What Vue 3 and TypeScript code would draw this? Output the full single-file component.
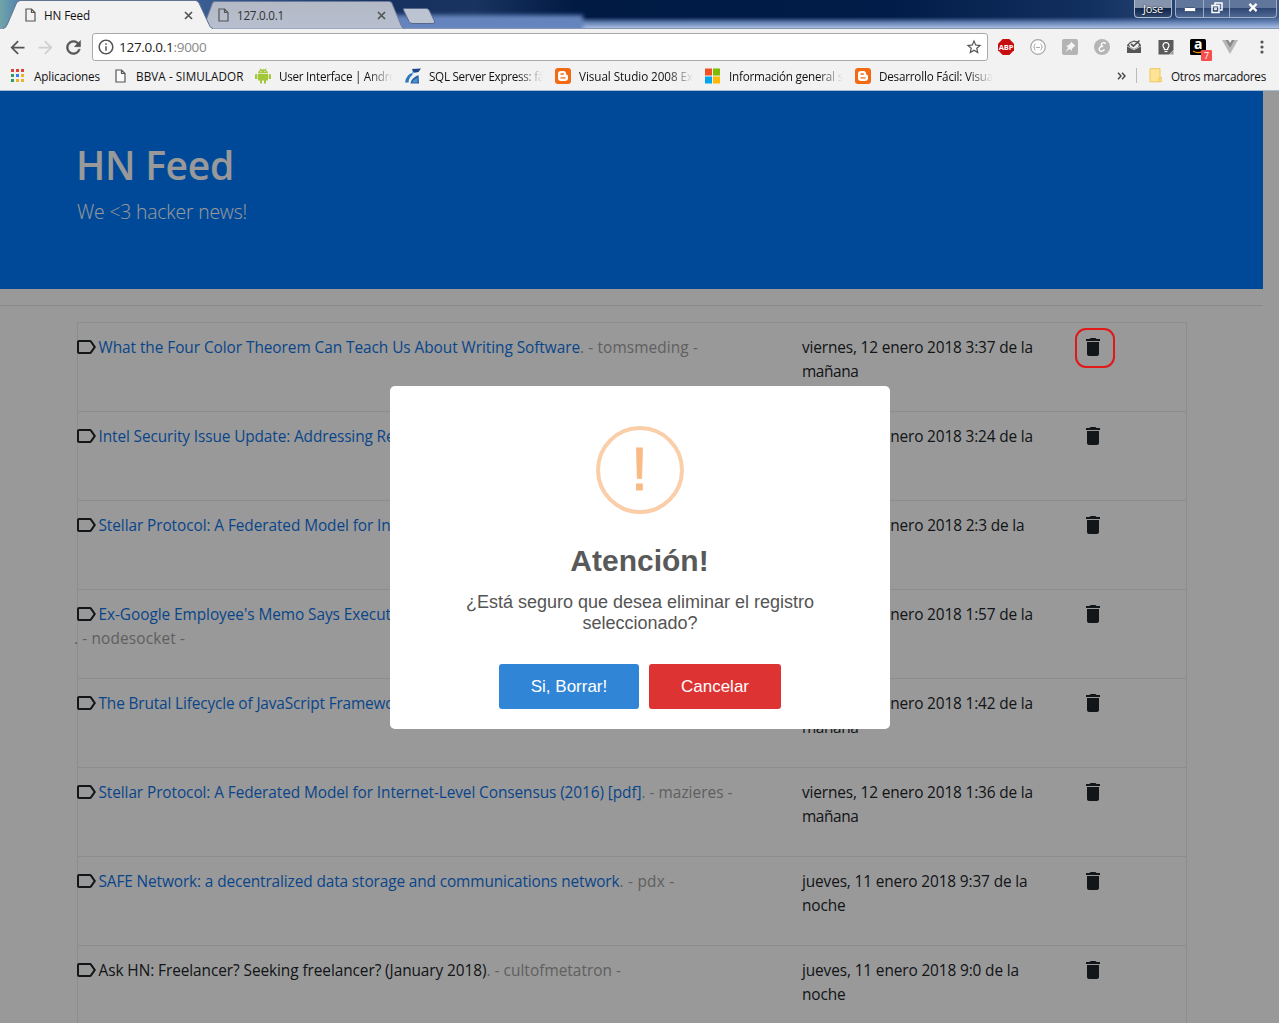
<script setup lang="ts">
interface Bookmark {
  label: string
  icon: 'apps' | 'page' | 'android' | 'sql' | 'blogger' | 'windows'
  width: number
  fit: number
  faded: boolean
}

interface Story {
  title: string
  tail: string
  titleWidth: number
  tailWidth: number
  plain?: boolean
  wrapped?: boolean
  date: string
  dateWidth: number
  period: string
}

// Spreads the letters of an element so that it takes the given width.
const vFit = {
  mounted(el: HTMLElement, binding: { value: number }) {
    const count = (el.textContent ?? '').length
    if (!binding.value || !count) return
    el.style.letterSpacing = '0px'
    const natural = el.getBoundingClientRect().width
    el.style.letterSpacing = `${(binding.value - natural) / count}px`
  },
}

const bookmarks: Bookmark[] = [
  { label: 'Aplicaciones', icon: 'apps', width: 104, fit: 66, faded: false },
  { label: 'BBVA - SIMULADOR', icon: 'page', width: 140, fit: 107.5, faded: false },
  { label: 'User Interface | Andro', icon: 'android', width: 150, fit: 117, faded: true },
  { label: 'SQL Server Express: fá', icon: 'sql', width: 150, fit: 115, faded: true },
  { label: 'Visual Studio 2008 Ex', icon: 'blogger', width: 150, fit: 114, faded: true },
  { label: 'Información general s', icon: 'windows', width: 150, fit: 114, faded: true },
  { label: 'Desarrollo Fácil: Visua', icon: 'blogger', width: 150, fit: 114, faded: true },
]

const am = 'mañana'
const pm = 'noche'

const stories: Story[] = [
  { title: 'What the Four Color Theorem Can Teach Us About Writing Software', tail: '. - tomsmeding -', titleWidth: 481.5, tailWidth: 118, date: 'viernes, 12 enero 2018 3:37 de la', dateWidth: 231, period: am },
  { title: 'Intel Security Issue Update: Addressing Re', tail: '', titleWidth: 296, tailWidth: 0, date: 'viernes, 12 enero 2018 3:24 de la', dateWidth: 231, period: am },
  { title: 'Stellar Protocol: A Federated Model for Internet-Level Consensus (2016) [pdf]', tail: '', titleWidth: 543.5, tailWidth: 0, date: 'viernes, 12 enero 2018 2:3 de la', dateWidth: 222.5, period: am },
  { title: "Ex-Google Employee's Memo Says Execut", tail: '. - nodesocket -', titleWidth: 292.5, tailWidth: 111, wrapped: true, date: 'viernes, 12 enero 2018 1:57 de la', dateWidth: 231, period: am },
  { title: 'The Brutal Lifecycle of JavaScript Framewo', tail: '', titleWidth: 296, tailWidth: 0, date: 'viernes, 12 enero 2018 1:42 de la', dateWidth: 231, period: am },
  { title: 'Stellar Protocol: A Federated Model for Internet-Level Consensus (2016) [pdf]', tail: '. - mazieres -', titleWidth: 543, tailWidth: 91, date: 'viernes, 12 enero 2018 1:36 de la', dateWidth: 231, period: am },
  { title: 'SAFE Network: a decentralized data storage and communications network', tail: '. - pdx -', titleWidth: 521, tailWidth: 55, date: 'jueves, 11 enero 2018 9:37 de la', dateWidth: 225.5, period: pm },
  { title: 'Ask HN: Freelancer? Seeking freelancer? (January 2018)', tail: '. - cultofmetatron -', titleWidth: 388, tailWidth: 134.5, plain: true, date: 'jueves, 11 enero 2018 9:0 de la', dateWidth: 217, period: pm },
]
</script>

<template>
  <div class="window">
    <header class="chrome">
      <div class="tabstrip">
        <svg class="tabstrip-art" width="1279" height="29" viewBox="0 0 1279 29">
          <defs>
            <linearGradient id="sky" x1="0" x2="1" y1="0" y2="0">
              <stop offset="0" stop-color="#6fa5a8" />
              <stop offset=".015" stop-color="#5581b2" />
              <stop offset=".15" stop-color="#3c5f95" />
              <stop offset=".31" stop-color="#16305f" />
              <stop offset=".37" stop-color="#1a3461" />
              <stop offset=".45" stop-color="#001a44" />
              <stop offset=".7" stop-color="#011c48" />
              <stop offset=".85" stop-color="#12305f" />
              <stop offset="1" stop-color="#3d5a8c" />
            </linearGradient>
            <linearGradient id="glow" x1="0" x2="0" y1="0" y2="1">
              <stop offset="0" stop-color="#6f8fc4" stop-opacity="0" />
              <stop offset=".5" stop-color="#7391c3" stop-opacity=".85" />
              <stop offset="1" stop-color="#a9bfe2" />
            </linearGradient>
            <linearGradient id="idle" x1="0" x2="0" y1="0" y2="1">
              <stop offset="0" stop-color="#b3b9c4" />
              <stop offset="1" stop-color="#b7bfd0" />
            </linearGradient>
            <filter id="soft" x="-10%" y="-50%" width="120%" height="200%"><feGaussianBlur stdDeviation="2" /></filter>
          </defs>
          <rect width="1279" height="29" fill="url(#sky)" />
          <rect x="380" y="17" width="899" height="11" fill="url(#glow)" />
          <rect x="380" y="15" width="203" height="16" fill="#6584bd" filter="url(#soft)" />
          <rect y="28" width="1279" height="1" fill="#8795b3" />
          <path d="M203 28.500L212.500 3Q213 1.500 215 1.500H389Q391 1.500 391.800 3L401 25Q402 28.500 405 28.500" fill="url(#idle)" stroke="#6b7b9b" />
          <path d="M404 8.500H426Q428 8.500 429 10L434.500 21Q435 23.500 433 23.500H412Q410 23.500 409 21.500L403.500 10Q403 8.500 404 8.500Z" fill="#bcc4d2" stroke="#56698d" />
          <path d="M3 29Q6 28 7.500 24L16.500 3Q17.500 1 20 1H196Q198 1 199 3L209 24.500Q210 28 213 29Z" fill="#f2f2f2" />
          <path d="M3 28.500Q6 28 7.500 24L16.500 3Q17.500 1 20 .5H196Q198 1 199 3L209 24.500Q210 28 213 28.500" fill="none" stroke="#60738f" />
        </svg>
        <div class="tab">
          <svg class="page-icon" width="11" height="14" viewBox="0 0 11 14"><path d="M1 1H6.500L10 4.500V13H1ZM6.500 1V4.500H10" /></svg>
          <span v-fit="46" class="tab-title">HN Feed</span>
          <svg class="tab-close" width="9" height="9" viewBox="0 0 9 9"><path d="M1 1L8 8M8 1L1 8" /></svg>
        </div>
        <div class="tab">
          <svg class="page-icon" width="11" height="14" viewBox="0 0 11 14"><path d="M1 1H6.500L10 4.500V13H1ZM6.500 1V4.500H10" /></svg>
          <span v-fit="47" class="tab-title">127.0.0.1</span>
          <svg class="tab-close" width="9" height="9" viewBox="0 0 9 9"><path d="M1 1L8 8M8 1L1 8" /></svg>
        </div>
        <div class="controls">
          <span class="user">Jose</span>
          <div class="buttons">
            <span class="control min"><svg width="12" height="5" viewBox="0 0 12 5"><rect x=".5" y=".5" width="11" height="4" rx="1" fill="#fff" stroke="#4b5b78" /></svg></span>
            <span class="control max"><svg width="12" height="12" viewBox="0 0 12 12" fill="none" stroke="#fff" stroke-width="1.500"><path d="M4 3V1H11V8H9" /><rect x="1" y="3.500" width="7" height="7" /><rect x="3.700" y="6" width="1.600" height="1.600" stroke-width="1" /></svg></span>
            <span class="control shut"><svg width="10" height="9" viewBox="0 0 11 10"><path d="M1.500 1L9.500 9M9.500 1L1.500 9" stroke="#fff" stroke-width="2.500" /></svg></span>
          </div>
        </div>
      </div>

      <div class="toolbar">
        <svg class="nav" width="21" height="21" viewBox="0 0 24 24" fill="#555"><path d="M20 11H7.830l5.590-5.590L12 4l-8 8 8 8 1.410-1.410L7.830 13H20v-2z" /></svg>
        <svg class="nav" width="21" height="21" viewBox="0 0 24 24" fill="#d0d0d0"><path d="M12 4l-1.410 1.410L16.170 11H4v2h12.170l-5.580 5.590L12 20l8-8z" /></svg>
        <svg class="nav" width="21" height="21" viewBox="0 0 24 24" fill="#555" stroke="#555" stroke-width=".6"><path d="M17.650 6.350C16.200 4.900 14.210 4 12 4c-4.420 0-7.990 3.580-7.990 8s3.570 8 7.990 8c3.730 0 6.840-2.550 7.730-6h-2.080c-.82 2.330-3.040 4-5.650 4-3.310 0-6-2.690-6-6s2.690-6 6-6c1.660 0 3.140.69 4.220 1.780L13 11h7V4l-2.350 2.350z" /></svg>
        <div class="omnibox">
          <svg width="18" height="18" viewBox="0 0 24 24" fill="#555"><path d="M11 17h2v-6h-2v6zm1-15C6.480 2 2 6.480 2 12s4.480 10 10 10 10-4.480 10-10S17.520 2 12 2zm0 18c-4.410 0-8-3.590-8-8s3.590-8 8-8 8 3.590 8 8-3.590 8-8 8zM11 9h2V7h-2v2z" /></svg>
          <span v-fit="87.5" class="address">127.0.0.1<span class="port">:9000</span></span>
          <svg class="star" width="18" height="18" viewBox="0 0 24 24" fill="#555"><path d="M22 9.240l-7.190-.62L12 2 9.190 8.630 2 9.240l5.460 4.730L5.820 21 12 17.270 18.180 21l-1.630-7.030L22 9.240zM12 15.400l-3.760 2.270 1-4.280-3.320-2.880 4.380-.38L12 6.100l1.710 4.040 4.380.38-3.320 2.880 1 4.280L12 15.400z" /></svg>
        </div>
        <div class="extensions">
          <span class="ext abp"><svg width="16" height="16" viewBox="0 0 16 16"><path d="M4.700 0H11.300L16 4.700V11.300L11.300 16H4.700L0 11.300V4.700Z" fill="#c70d0d" /></svg><b>ABP</b></span>
          <span class="ext json"><svg width="16" height="16" viewBox="0 0 16 16"><circle cx="8" cy="8" r="7.300" fill="#fdfdfd" stroke="#a5a5a5" stroke-width="1.200" /><path d="M5.500 5Q4.300 5 4.500 6.500Q4.600 8 3.500 8Q4.600 8 4.500 9.500Q4.300 11 5.500 11M10.500 5Q11.700 5 11.500 6.500Q11.400 8 12.500 8Q11.400 8 11.500 9.500Q11.700 11 10.500 11M6 8.500H10" fill="none" stroke="#aaa" /></svg></span>
          <span class="ext"><svg width="16" height="16" viewBox="0 0 16 16"><rect width="16" height="16" rx="2" fill="#b4b4b4" /><path d="M9 2.500L13.500 7L12.200 7.500L9.800 10V12L7.500 10L3.500 13L6.200 8.700L4 6.500H6.200L8.700 4Z" fill="#f5f5f5" /></svg></span>
          <span class="ext"><svg width="16" height="16" viewBox="0 0 16 16"><circle cx="8" cy="8" r="8" fill="#b5b5b5" /><path d="M11.300 5Q11.500 3.400 9.500 3.600Q7.200 4 7.300 6Q7.400 7.400 9.200 7.300Q5.500 7.500 5.200 10Q5.200 12.300 7.500 12.200Q9.500 12 10.500 10.300" fill="none" stroke="#fff" stroke-width="1.400" /></svg></span>
          <span class="ext"><svg width="16" height="16" viewBox="0 0 16 16"><path d="M1 6L4 3L8 1.500L12 2.500L15 6V14H1Z" fill="#555" /><path d="M3 5.500Q8 0 13 5.500L12 8L8 10L4 8Z" fill="#f2f2f2" /><path d="M5 5L7.500 7.200L13.500 1.500" fill="none" stroke="#555" stroke-width="1.700" /><path d="M1 7L8 10.800L15 7" fill="none" stroke="#f2f2f2" stroke-width=".7" /></svg></span>
          <span class="ext"><svg width="16" height="16" viewBox="0 0 16 16"><path d="M.5 1H15.500V11L11 15.500H.5Z" fill="#5a5a5a" /><path d="M15.500 11.500V15.500H11.500Z" fill="#999" /><path d="M6.300 10.500V9.200Q5 8.300 5 6.500Q5.200 3.600 8 3.500Q10.800 3.600 11 6.500Q11 8.300 9.700 9.200V10.500Z" fill="none" stroke="#fff" stroke-width="1.200" /><path d="M6.500 12.500H9.500" stroke="#fff" stroke-width="1.200" /></svg></span>
          <span class="ext amazon"><svg width="16" height="16" viewBox="0 0 16 16"><rect width="16" height="16" rx="1.500" fill="#000" /><path d="M3 12Q8 15 12 12.500" fill="none" stroke="#f79400" stroke-width="1.200" /></svg><b>a</b><i>7</i></span>
          <span class="ext"><svg width="16" height="14" viewBox="0 0 16 14"><path d="M0 0H3.300L8 8L12.700 0H16L8 14Z" fill="#b7b7b7" /><path d="M3.300 0H6.200L8 3L9.800 0H12.700L8 8Z" fill="#888" /></svg></span>
          <span class="ext"><svg width="4" height="14" viewBox="0 0 4 14" fill="#555"><circle cx="2" cy="2" r="1.600" /><circle cx="2" cy="7" r="1.600" /><circle cx="2" cy="12" r="1.600" /></svg></span>
        </div>
      </div>

      <div class="bookmarks">
        <div v-for="(mark, i) in bookmarks" :key="i" class="bookmark" :style="{ width: mark.width + 'px' }">
          <svg v-if="mark.icon === 'apps'" class="apps" width="13" height="13" viewBox="0 0 13 13"><path d="M0 0H3V3H0ZM5 0H8V3H5ZM10 0H13V3H10Z" fill="#db4437" /><path d="M0 5H3V8H0Z" fill="#2f9e5b" /><path d="M5 5H8V8H5Z" fill="#3b7ded" /><path d="M10 5H13V8H10ZM5 10H8V13H5ZM10 10H13V13H10Z" fill="#eeb32d" /><path d="M0 10H3V13H0Z" fill="#2f9e5b" /></svg>
          <svg v-else-if="mark.icon === 'page'" class="page-icon doc" width="11" height="14" viewBox="0 0 11 14"><path d="M1 1H6.500L10 4.500V13H1ZM6.500 1V4.500H10" /></svg>
          <svg v-else-if="mark.icon === 'android'" class="fav" width="16" height="16" viewBox="0 0 16 16" fill="#a4c639"><path d="M3 5.300Q3 2.800 5.300 1.800L4.500 .5L5.200 .2L6.100 1.500Q8 1 9.900 1.500L10.800 .2L11.500 .5L10.700 1.800Q13 2.800 13 5.300Z" /><path d="M3 6H13V12.500H11V15.500H9V12.500H7V15.500H5V12.500H3ZM0 6.500Q1.200 5.300 2.300 6.500V11H0ZM13.700 6.500Q14.900 5.300 16 6.500V11H13.700Z" /><circle cx="6" cy="3.600" r=".6" fill="#fff" /><circle cx="10" cy="3.600" r=".6" fill="#fff" /></svg>
          <svg v-else-if="mark.icon === 'sql'" class="fav" width="16" height="16" viewBox="0 0 16 16"><path d="M7 1L16 .5L13.500 4L8.500 5Z" fill="#1e4488" /><path d="M0 14.500Q1 7 7 5L7.500 7Q4 9 3.500 14.500Z" fill="#2d78bd" /><path d="M13.500 7L14 15.500H5.500Q6 10 13.500 7Z" fill="#245da3" /><path d="M7 3L10 4.500L7 6.500Z" fill="#74b8df" /><path d="M7 14.500Q8 11.500 12.500 10V14.500Z" fill="#4a94cd" /></svg>
          <svg v-else-if="mark.icon === 'blogger'" class="fav" width="16" height="16" viewBox="0 0 16 16"><rect width="16" height="16" rx="3" fill="#f46a12" /><path d="M6 3H8.500Q11 3 11 5.500Q11 6.800 12.300 7Q13 7.100 13 8V10Q13 13 10 13H6Q3 13 3 10V6Q3 3 6 3Z" fill="#fff" /><path d="M6 6H8.300M6 9.900H10" stroke="#f46a12" stroke-width="1.400" stroke-linecap="round" /></svg>
          <svg v-else class="fav" width="16" height="16" viewBox="0 0 16 16"><path d="M0 .5H7V7.500H0Z" fill="#f25022" /><path d="M8 .5H15V7.500H8Z" fill="#7fba00" /><path d="M0 8.500H7V15.500H0Z" fill="#00a4ef" /><path d="M8 8.500H15V15.500H8Z" fill="#ffb900" /></svg>
          <span class="mark-text" :class="{ faded: mark.faded }"><span v-fit="mark.fit">{{ mark.label }}</span></span>
        </div>
        <div class="others">
          <svg width="9" height="8" viewBox="0 0 9 8" fill="none" stroke="#444" stroke-width="1.400"><path d="M1 .7L4 4L1 7.300M5 .7L8 4L5 7.300" /></svg>
          <span class="divider"></span>
          <svg class="folder" width="13" height="15" viewBox="0 0 13 15"><path d="M1 .7H11V9.500H12.300V13.800H1Z" fill="#ffe495" stroke="#ecc758" /><path d="M10 13.500V10H12" fill="none" stroke="#ecc758" /></svg>
          <span v-fit="95">Otros marcadores</span>
        </div>
      </div>
    </header>

    <main class="page">
      <section class="jumbotron">
        <h1><span v-fit="158">HN Feed</span></h1>
        <p><span v-fit="170">We &lt;3 hacker news!</span></p>
      </section>
      <hr />
      <div class="feed">
        <div v-for="(story, i) in stories" :key="i" class="row">
          <div class="story">
            <svg class="label-icon" width="24" height="24" viewBox="0 0 24 24" fill="#212529"><path d="M17.630 5.840C17.270 5.330 16.670 5 16 5L5 5.010C3.900 5.010 3 5.900 3 7v10c0 1.100.9 1.990 2 1.990L16 19c.67 0 1.270-.33 1.630-.84L22 12l-4.370-6.160zM16 17H5V7h11l3.550 5L16 17z" /></svg><span v-fit="story.titleWidth" class="title" :class="{ plain: story.plain }">{{ story.title }}</span><br v-if="story.wrapped" /><span v-fit="story.tailWidth" class="tail">{{ story.tail }}</span>
          </div>
          <div class="date">
            <span v-fit="story.dateWidth">{{ story.date }}</span><br />
            <span v-fit="story.period === am ? 56.5 : 43.5">{{ story.period }}</span>
          </div>
          <div class="remove">
            <svg width="24" height="24" viewBox="0 0 24 24" fill="#212529"><path d="M6 19c0 1.100.9 2 2 2h8c1.100 0 2-.9 2-2V7H6v12zM19 4h-3.500l-1-1h-5l-1 1H5v2h14V4z" /></svg>
          </div>
        </div>
      </div>

      <div class="overlay">
        <div class="modal">
          <div class="warning">!</div>
          <h2>Atención!</h2>
          <p class="question">¿Está seguro que desea eliminar el registro seleccionado?</p>
          <div class="actions">
            <button class="confirm">Si, Borrar!</button>
            <button class="cancel">Cancelar</button>
          </div>
        </div>
      </div>
      <span class="marker"></span>
    </main>
  </div>
</template>

<style>
html,
body {
  margin: 0;
  overflow: hidden;
}
</style>

<style scoped>
.window {
  width: 1279px;
  height: 1023px;
  display: flex;
  flex-direction: column;
  overflow: hidden;
  font-family: "Open Sans", "Noto Sans", sans-serif;
  white-space: pre;
}

svg {
  display: block;
  flex: none;
}

.chrome {
  height: 90px;
  flex: none;
  background: #f2f2f2;
  border-bottom: 1px solid #a4bdd3;
  font-size: 11.7px;
  color: #111;
}

.tabstrip {
  position: relative;
  height: 29px;
  display: flex;
}

.tabstrip-art {
  position: absolute;
  left: 0;
  top: 0;
}

.tab {
  position: relative;
  width: 193px;
  height: 29px;
  padding-left: 25px;
  padding-top: 1px;
  box-sizing: border-box;
  display: flex;
  align-items: center;
}

.tab + .tab {
  color: #333;
}

.page-icon {
  fill: #fafafa;
  stroke: #555;
  stroke-width: 1.2;
}

.tab .page-icon {
  fill: none;
}

.tab-title {
  margin-left: 8px;
  line-height: 16px;
}

.tab-close {
  margin-left: auto;
  margin-right: 0;
  fill: none;
  stroke: #555;
  stroke-width: 1.7;
}

.controls {
  position: relative;
  margin-left: auto;
  display: flex;
  gap: 3px;
  height: 18px;
  padding-right: 2px;
}

.user {
  width: 36px;
  border: 1px solid #b0bccd;
  border-top: 0;
  border-radius: 0 0 4px 4px;
  background: linear-gradient(#8594ac 45%, #10264c 50%, #33486e);
  color: #fff;
  font-size: 11px;
  line-height: 17px;
  text-align: center;
  letter-spacing: -0.3px;
  text-shadow: 0 0 2px #000;
}

.buttons {
  display: flex;
  border: 1px solid #a0afc8;
  border-top: 0;
  border-radius: 0 0 4px 4px;
  background: linear-gradient(#61769b 45%, #2f4873 50%, #4e6893);
}

.control {
  width: 27px;
  box-sizing: border-box;
  display: flex;
  align-items: center;
  justify-content: center;
  padding-bottom: 2px;
}

.control + .control {
  border-left: 1px solid #9aabc5;
}

.control.min {
  padding-top: 4px;
}

.control.max {
  width: 26px;
}

.control.shut {
  width: 47px;
}

.toolbar {
  height: 36px;
  display: flex;
  align-items: center;
}

.nav {
  margin-left: 7px;
}

.omnibox {
  width: 896px;
  height: 28px;
  margin-left: 8px;
  padding: 0 4px 0 4px;
  box-sizing: border-box;
  border: 1px solid #a9a9a9;
  border-radius: 3px;
  background: #fff;
  display: flex;
  align-items: center;
}

.address {
  margin-left: 4px;
  font-size: 13.5px;
  line-height: 20px;
  color: #222;
}

.port {
  color: #888;
}

.star {
  margin-left: auto;
}

.extensions {
  display: flex;
  margin-left: 2px;
}

.ext {
  position: relative;
  width: 32px;
  height: 24px;
  display: flex;
  align-items: center;
  justify-content: center;
}

.ext b {
  position: absolute;
  color: #fff;
}

.abp b {
  left: 0;
  right: 0;
  top: 6px;
  font: 700 7.5px/12px "Open Sans", sans-serif;
  letter-spacing: -0.2px;
  text-align: center;
}

.amazon b {
  left: 12px;
  top: 2px;
  font: 700 14px/14px "Open Sans", sans-serif;
}

.amazon i {
  position: absolute;
  left: 19px;
  top: 15px;
  width: 11px;
  height: 11px;
  background: #f5504e;
  border-radius: 1px;
  color: #fff;
  font: normal 9px/11px "Open Sans", sans-serif;
  text-align: center;
}

.bookmarks {
  height: 25px;
  padding: 0 13px 0 11px;
  display: flex;
  align-items: center;
  line-height: 18px;
  margin-top: -2px;
}

.bookmark {
  display: flex;
  align-items: center;
  flex: none;
}

.apps,
.doc {
  margin-right: 10px;
}

.fav {
  margin-right: 8px;
}

.mark-text {
  display: block;
  white-space: nowrap;
}

.faded {
  width: 114px;
  -webkit-mask-image: linear-gradient(90deg, #000 78%, transparent 100%);
  mask-image: linear-gradient(90deg, #000 78%, transparent 100%);
}

.others {
  margin-left: auto;
  display: flex;
  align-items: center;
}

.divider {
  width: 1px;
  height: 15px;
  margin: 0 12px 0 10px;
  background: #bbb;
}

.folder {
  margin-right: 9px;
}

.page {
  position: relative;
  flex: 1;
  background: #fff;
  overflow: hidden;
  color: #212529;
  font-size: 15.4px;
  line-height: 24px;
}

.jumbotron {
  width: 1263px;
  height: 198px;
  box-sizing: border-box;
  padding: 48px 76px 0;
  background: #007bff;
  color: #fff;
}

.jumbotron h1 {
  margin: 0;
  font-size: 39px;
  font-weight: 600;
  line-height: 52px;
}

.jumbotron p {
  margin: 6px 0 0 1px;
  font-size: 19.3px;
  font-weight: 300;
  line-height: 30px;
}

hr {
  width: 1263px;
  height: 1px;
  margin: 16px 0;
  border: 0;
  background: rgba(0, 0, 0, 0.1);
}

.feed {
  width: 1108px;
  margin-left: 77px;
  border: 1px solid #e9ecef;
  border-top: 0;
}

.row {
  height: 88px;
  display: flex;
  border-top: 1px solid #e9ecef;
}

.story {
  width: 728px;
  margin-left: -4px;
  padding-top: 13px;
}

.label-icon {
  display: inline-block;
  vertical-align: top;
  margin: -1px 0.5px 0 0;
}

.title {
  color: #0f74e6;
}

.title.plain {
  color: #212529;
}

.tail {
  color: #a0a0a0;
}

.date {
  width: 279px;
  padding-top: 13px;
  white-space: nowrap;
}

.remove {
  padding-top: 12px;
}

.overlay {
  position: absolute;
  inset: 0;
  background: rgba(0, 0, 0, 0.4);
  display: flex;
  align-items: center;
  justify-content: center;
}

.modal {
  width: 500px;
  height: 343px;
  box-sizing: border-box;
  padding: 40px 20px 0;
  border-radius: 5px;
  background: #fff;
  font-family: "Liberation Sans", Arial, sans-serif;
  display: flex;
  flex-direction: column;
  align-items: center;
  white-space: normal;
}

.warning {
  width: 80px;
  height: 80px;
  border: 4px solid #facea8;
  border-radius: 50%;
  color: #f8bb86;
  font-size: 61px;
  line-height: 79px;
  text-align: center;
  -webkit-text-stroke: 0.8px #f8bb86;
}

.modal h2 {
  margin: 29px 0 0;
  font-size: 30px;
  line-height: 36px;
  color: #595959;
}

.question {
  margin: 13px 0 0;
  padding-left: 1px;
  font-size: 18px;
  line-height: 21px;
  color: #545454;
  text-align: center;
}

.actions {
  display: flex;
  gap: 10px;
  margin-top: 30px;
}

.actions button {
  height: 45px;
  padding: 2px 0 0 1px;
  border: 0;
  border-radius: 3px;
  color: #fff;
  font-family: inherit;
  font-size: 17px;
}

.confirm {
  width: 140px;
  background: #3085d6;
}

.cancel {
  width: 132px;
  background: #dd3333;
}

.marker {
  position: absolute;
  left: 1075px;
  top: 237px;
  width: 36px;
  height: 36px;
  border: 2px solid #e01818;
  border-radius: 11px;
}
</style>
